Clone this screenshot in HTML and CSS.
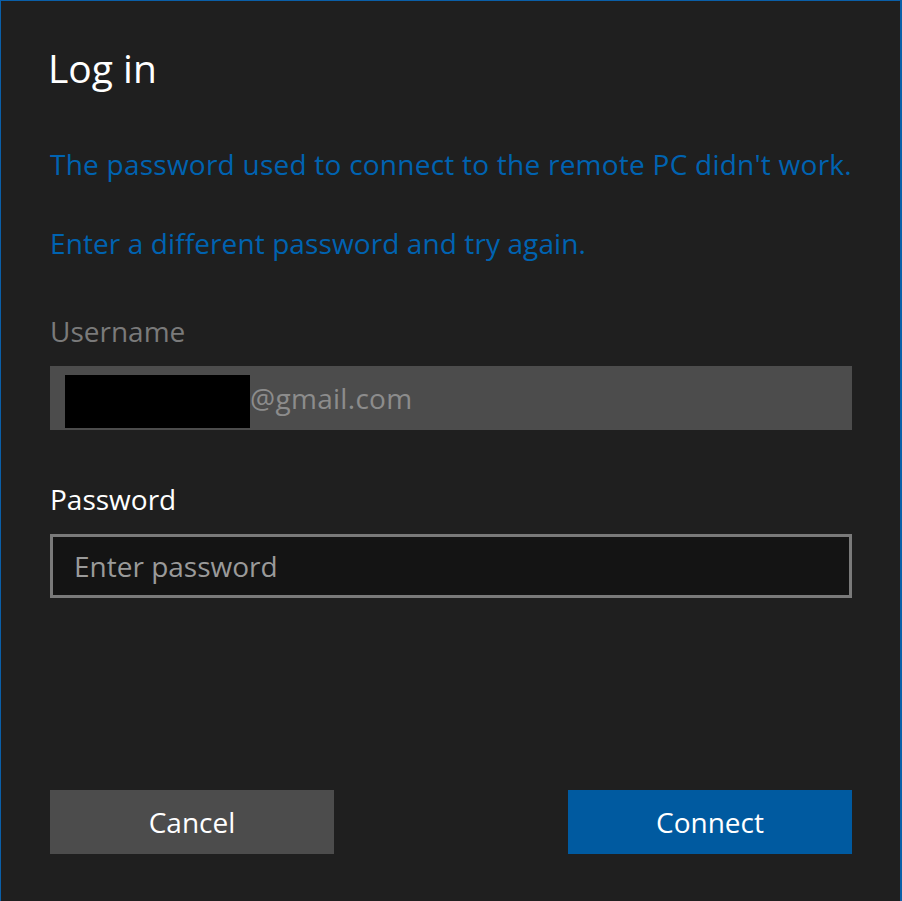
FILE: index.html
```
<!DOCTYPE html>
<html>
<head>
<meta charset="utf-8">
<link rel="stylesheet" href="styles.css">
</head>
<body>
<div class="dialog">
  <h1 class="title">Log in</h1>
  <p class="msg msg-first">The password used to connect to the remote PC didn't work.</p>
  <p class="msg msg-second">Enter a different password and try again.</p>
  <div class="label label-disabled">Username</div>
  <div class="field field-disabled"><span class="redact"></span><span class="field-text">@gmail.com</span></div>
  <div class="label label-active">Password</div>
  <div class="field field-input"><span class="placeholder">Enter password</span></div>
  <div class="spacer"></div>
  <div class="actions">
    <div class="btn btn-cancel">Cancel</div>
    <div class="btn btn-primary">Connect</div>
  </div>
</div>
</body>
</html>
```
FILE: styles.css
```
html, body {
  margin: 0;
  padding: 0;
  background: #1f1f1f;
}
.dialog {
  box-sizing: border-box;
  width: 902px;
  height: 901px;
  background: #1f1f1f;
  border-top: 1px solid #0a5fa8;
  border-left: 1px solid #0a5fa8;
  border-right: 2px solid #0a5fa8;
  padding: 39px 48px 0 49px;
  display: flex;
  flex-direction: column;
  font-family: "Open Sans", "Noto Sans", sans-serif;
}
.title {
  margin: 0 0 0 -2px;
  font-size: 39px;
  line-height: 56px;
  font-weight: 400;
  color: #ffffff;
}
.msg {
  margin: 0;
  font-size: 28px;
  line-height: 40px;
  color: #0063b1;
  white-space: nowrap;
}
.msg-first { margin-top: 48px; letter-spacing: 0.24px; }
.msg-second { margin-top: 39px; letter-spacing: 0.1px; }
.label {
  font-size: 28px;
  line-height: 40px;
  margin-top: 48px;
}
.label-disabled { color: #7a7a7a; }
.label-active { color: #ffffff; margin-top: 49px; }
.field {
  box-sizing: border-box;
  height: 64px;
  margin-top: 15px;
  display: flex;
  align-items: center;
  font-size: 28px;
}
.field-disabled {
  background: #4c4c4c;
  padding-left: 15px;
}
.redact {
  display: block;
  width: 185px;
  height: 53px;
  background: #000000;
  margin-top: 7px;
}
.field-text { color: #8c8c8c; letter-spacing: 0.3px; }
.field-input {
  background: #141414;
  border: 3px solid #7a7a7a;
  padding-left: 21px;
}
.placeholder { color: #9a9a9a; }
.spacer { flex: 1; }
.actions {
  display: flex;
  justify-content: space-between;
  margin-bottom: 47px;
}
.btn {
  width: 284px;
  height: 64px;
  display: flex;
  align-items: center;
  justify-content: center;
  font-size: 28px;
  color: #ffffff;
}
.btn-cancel { background: #4c4c4c; }
.btn-primary { background: #005aa0; }
```
